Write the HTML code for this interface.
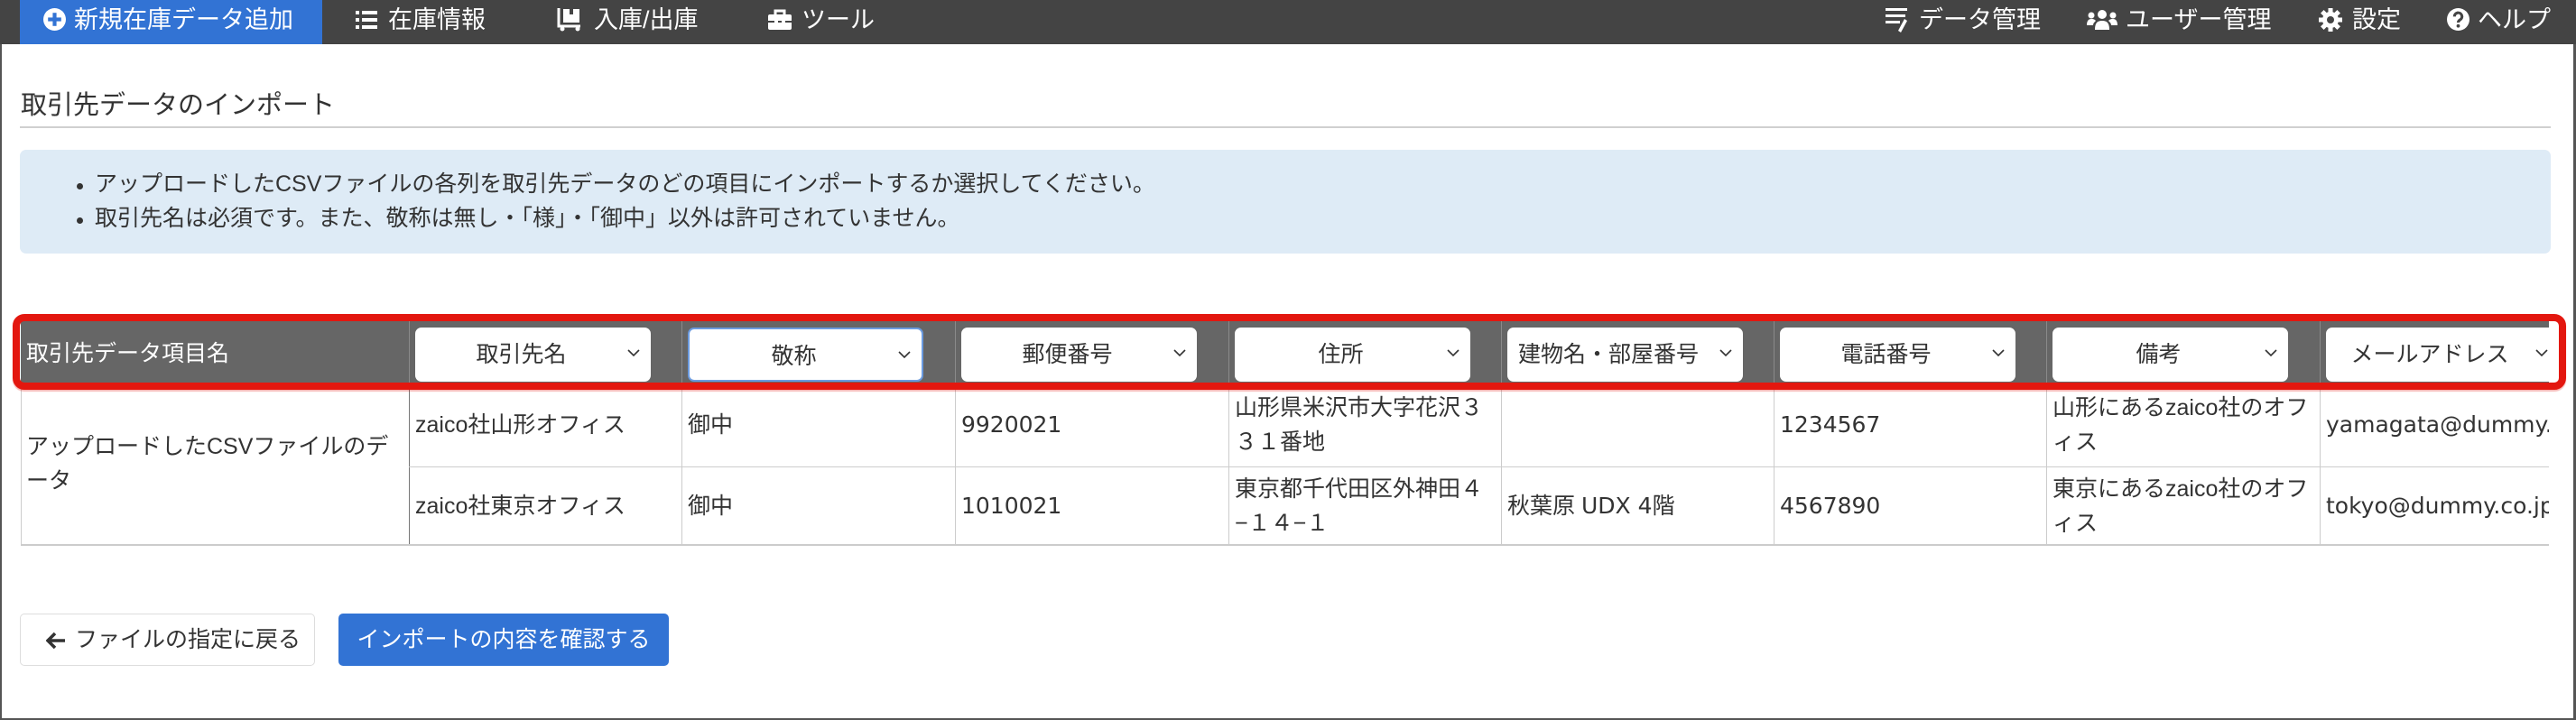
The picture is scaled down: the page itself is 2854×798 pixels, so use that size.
<!DOCTYPE html>
<html><head><meta charset="utf-8"><style>
*{margin:0;padding:0;box-sizing:border-box}
body{width:2854px;height:798px;position:relative;overflow:hidden;background:#fff;font-family:"Liberation Sans","Noto Sans CJK JP",sans-serif;color:#333}
.abs{position:absolute}
.nav{left:0;top:0;width:2854px;height:49px;background:#444}
.ni{position:absolute;top:0;height:49px;line-height:44px;font-size:27px;color:#fff;white-space:nowrap}
.ni svg{position:absolute}
.frame{left:0;top:49px;width:2854px;height:749px;border-left:2px solid #555;border-right:3px solid #555;border-bottom:2px solid #555}
.title{left:23px;top:97px;font-size:29px;line-height:40px;color:#333}
.hr{left:22px;top:140px;width:2804px;height:2px;background:#d0d0d0}
.info{left:22px;top:166px;width:2804px;height:115px;background:#deebf6;border-radius:7px}
.li{position:absolute;left:105px;font-size:25px;line-height:36px;white-space:nowrap;color:#333}
.dot{position:absolute;left:85px;width:7px;height:7px;border-radius:50%;background:#333}
.hdr{left:23px;top:356px;width:2801px;height:68px;background:#666}
.hcell{position:absolute;top:0;height:68px}
.sel{position:absolute;top:7px;left:6px;width:261px;height:60px;background:#fff;border-radius:7px;font-size:25px;line-height:60px;text-align:center;padding-right:26px;color:#333;white-space:nowrap;overflow:hidden}
.sel svg{position:absolute;right:12px;top:24px}
.vl{position:absolute;width:1px}
.cell{position:absolute;font-size:25px;line-height:38px;color:#333;display:flex;align-items:center;padding-left:6px}
.lat{font-family:"DejaVu Sans","Noto Sans CJK JP",sans-serif}
.red{left:14px;top:348px;width:2829px;height:84px;border:8px solid #e3170f;border-radius:13px;box-shadow:0 2px 1px rgba(227,23,15,.3)}
.btn{position:absolute;top:680px;height:58px;border-radius:5px;font-size:25px;line-height:56px;white-space:nowrap}
</style></head><body>
<div class="abs nav">
 <div class="ni" style="left:22px;width:335px;background:#3273d4"></div>
 <div class="ni" style="left:48px"><svg style="left:0;top:9px" width="25" height="25" viewBox="0 0 24 24"><circle cx="12" cy="12" r="12" fill="#fff"/><rect x="10" y="5" width="4" height="14" fill="#3273d4"/><rect x="5" y="10" width="14" height="4" fill="#3273d4"/></svg><span style="margin-left:34px">新規在庫データ追加</span></div>
 <div class="ni" style="left:394px"><svg style="left:0;top:11px" width="24" height="22" viewBox="0 0 24 22"><rect x="0" y="1" width="4" height="4" fill="#fff"/><rect x="0" y="9" width="4" height="4" fill="#fff"/><rect x="0" y="17" width="4" height="4" fill="#fff"/><rect x="7" y="1" width="17" height="4" fill="#fff"/><rect x="7" y="9" width="17" height="4" fill="#fff"/><rect x="7" y="17" width="17" height="4" fill="#fff"/></svg><span style="margin-left:36px">在庫情報</span></div>
 <div class="ni" style="left:617px"><svg style="left:0;top:7px" width="28" height="28" viewBox="0 0 28 28"><path d="M2 2v20h24" stroke="#fff" stroke-width="3" fill="none"/><rect x="7" y="3" width="18" height="15" fill="#fff"/><rect x="14" y="3" width="4" height="6" fill="#444"/><circle cx="6" cy="25" r="2.5" fill="#fff"/><circle cx="23" cy="25" r="2.5" fill="#fff"/></svg><span style="margin-left:41px">入庫/出庫</span></div>
 <div class="ni" style="left:851px"><svg style="left:0;top:10px" width="26" height="24" viewBox="0 0 26 24"><path d="M8 6V2h10v4" stroke="#fff" stroke-width="3" fill="none"/><rect x="0" y="6" width="26" height="17" rx="2" fill="#fff"/><rect x="0" y="13" width="26" height="2" fill="#444"/><rect x="7" y="11" width="4" height="6" fill="#fff"/><rect x="15" y="11" width="4" height="6" fill="#fff"/></svg><span style="margin-left:37px">ツール</span></div>
 <div class="ni" style="left:2089px"><svg style="left:0;top:9px" width="26" height="28" viewBox="0 0 26 28"><rect x="0" y="0" width="24" height="3" fill="#fff"/><rect x="0" y="7" width="22" height="3" fill="#fff"/><rect x="0" y="14" width="16" height="3" fill="#fff"/><path d="M21 12l3 2-7 13-3-2z" fill="#fff"/></svg><span style="margin-left:37px">データ管理</span></div>
 <div class="ni" style="left:2312px"><svg style="left:0;top:11px" width="34" height="24" viewBox="0 0 34 24"><circle cx="5" cy="6" r="3.5" fill="#fff"/><circle cx="29" cy="6" r="3.5" fill="#fff"/><circle cx="17" cy="5" r="5" fill="#fff"/><path d="M9 22c0-8 3-10 8-10s8 2 8 10z" fill="#fff"/><path d="M0 17c0-5 2-7 5-7s4 1 5 2c-2 2-3 3-3 5z M34 17c0-5-2-7-5-7s-4 1-5 2c2 2 3 3 3 5z" fill="#fff"/></svg><span style="margin-left:43px">ユーザー管理</span></div>
 <div class="ni" style="left:2569px"><svg style="left:0;top:9px" width="26" height="26" viewBox="0 0 26 26"><g fill="#fff"><circle cx="13" cy="13" r="9"/><rect x="10.5" y="0" width="5" height="26"/><rect x="0" y="10.5" width="26" height="5"/><rect x="10.5" y="0" width="5" height="26" transform="rotate(45 13 13)"/><rect x="10.5" y="0" width="5" height="26" transform="rotate(-45 13 13)"/></g><circle cx="13" cy="13" r="4" fill="#444"/></svg><span style="margin-left:37px">設定</span></div>
 <div class="ni" style="left:2711px"><svg style="left:0;top:9px" width="25" height="25" viewBox="0 0 24 24"><circle cx="12" cy="12" r="12" fill="#fff"/><path d="M8 9a4 4 0 1 1 6 3.4c-1.4.8-2 1.4-2 3" stroke="#444" stroke-width="3" fill="none"/><circle cx="12" cy="19" r="1.8" fill="#444"/></svg><span style="margin-left:34px">ヘルプ</span></div>
</div>
<div class="abs frame"></div>
<div class="abs title">取引先データのインポート</div>
<div class="abs hr"></div>
<div class="abs info">
 <div class="dot" style="top:37px;left:63px"></div><div class="li" style="top:20px;left:83px">アップロードしたCSVファイルの各列を取引先データのどの項目にインポートするか選択してください。</div>
 <div class="dot" style="top:75px;left:63px"></div><div class="li" style="top:58px;left:83px">取引先名は必須です。また、敬称は無し・「様」・「御中」以外は許可されていません。</div>
</div>

<div class="abs hdr">
 <div class="hcell" style="left:6px;font-size:25px;line-height:72px;color:#fff">取引先データ項目名</div>
 <div class="vl" style="left:430px;top:0;height:68px;background:#8a8a8a"></div>
 <div class="hcell" style="left:431px"><div class="sel">取引先名<svg width="14" height="9" viewBox="0 0 14 9"><path d="M1 1l6 6 6-6" stroke="#333" stroke-width="1.6" fill="none"/></svg></div></div>
 <div class="vl" style="left:732px;top:0;height:68px;background:#8a8a8a"></div>
 <div class="hcell" style="left:733px"><div class="sel" style="border:2px solid #6b9be0">敬称<svg width="14" height="9" viewBox="0 0 14 9"><path d="M1 1l6 6 6-6" stroke="#333" stroke-width="1.6" fill="none"/></svg></div></div>
 <div class="vl" style="left:1035px;top:0;height:68px;background:#8a8a8a"></div>
 <div class="hcell" style="left:1036px"><div class="sel">郵便番号<svg width="14" height="9" viewBox="0 0 14 9"><path d="M1 1l6 6 6-6" stroke="#333" stroke-width="1.6" fill="none"/></svg></div></div>
 <div class="vl" style="left:1338px;top:0;height:68px;background:#8a8a8a"></div>
 <div class="hcell" style="left:1339px"><div class="sel">住所<svg width="14" height="9" viewBox="0 0 14 9"><path d="M1 1l6 6 6-6" stroke="#333" stroke-width="1.6" fill="none"/></svg></div></div>
 <div class="vl" style="left:1640px;top:0;height:68px;background:#8a8a8a"></div>
 <div class="hcell" style="left:1641px"><div class="sel" style="text-align:left;padding-left:12px">建物名・部屋番号<svg width="14" height="9" viewBox="0 0 14 9"><path d="M1 1l6 6 6-6" stroke="#333" stroke-width="1.6" fill="none"/></svg></div></div>
 <div class="vl" style="left:1942px;top:0;height:68px;background:#8a8a8a"></div>
 <div class="hcell" style="left:1943px"><div class="sel">電話番号<svg width="14" height="9" viewBox="0 0 14 9"><path d="M1 1l6 6 6-6" stroke="#333" stroke-width="1.6" fill="none"/></svg></div></div>
 <div class="vl" style="left:2244px;top:0;height:68px;background:#8a8a8a"></div>
 <div class="hcell" style="left:2245px"><div class="sel">備考<svg width="14" height="9" viewBox="0 0 14 9"><path d="M1 1l6 6 6-6" stroke="#333" stroke-width="1.6" fill="none"/></svg></div></div>
 <div class="vl" style="left:2547px;top:0;height:68px;background:#8a8a8a"></div>
 <div class="hcell" style="left:2548px;width:253px;overflow:hidden"><div class="sel" style="width:270px;border-radius:7px 0 0 7px;padding-right:40px">メールアドレス<svg style="right:24px" width="14" height="9" viewBox="0 0 14 9"><path d="M1 1l6 6 6-6" stroke="#333" stroke-width="1.6" fill="none"/></svg></div></div>
</div>

<div class="abs" style="left:23px;top:424px;width:2801px;height:181px;overflow:hidden">
 <div class="vl" style="left:0;top:0;height:181px;background:#ccc"></div>
 <div class="vl" style="left:430px;top:0;height:181px;background:#777"></div>
 <div class="vl" style="left:732px;top:0;height:181px;background:#ccc"></div>
 <div class="vl" style="left:1035px;top:0;height:181px;background:#ccc"></div>
 <div class="vl" style="left:1338px;top:0;height:181px;background:#ccc"></div>
 <div class="vl" style="left:1640px;top:0;height:181px;background:#ccc"></div>
 <div class="vl" style="left:1942px;top:0;height:181px;background:#ccc"></div>
 <div class="vl" style="left:2244px;top:0;height:181px;background:#ccc"></div>
 <div class="vl" style="left:2547px;top:0;height:181px;background:#ccc"></div>
 <div class="abs" style="left:430px;top:93px;width:2400px;height:1px;background:#ccc"></div>
 <div class="abs" style="left:0;top:179px;width:2830px;height:2px;background:#ccc"></div>
 <div class="cell" style="left:0;top:0;width:430px;height:180px">アップロードしたCSVファイルのデータ</div>
 <div class="cell" style="left:431px;top:0;width:301px;height:93px">zaico社山形オフィス</div>
 <div class="cell" style="left:733px;top:0;width:301px;height:93px">御中</div>
 <div class="cell lat" style="left:1036px;top:0;width:301px;height:93px">9920021</div>
 <div class="cell" style="left:1339px;top:0;width:301px;height:93px">山形県米沢市大字花沢３３１番地</div>
 <div class="cell lat" style="left:1943px;top:0;width:301px;height:93px">1234567</div>
 <div class="cell" style="left:2245px;top:0;width:301px;height:93px">山形にあるzaico社のオフィス</div>
 <div class="cell lat" style="left:2548px;top:0;width:400px;height:93px;white-space:nowrap">yamagata@dummy.co.jp</div>
 <div class="cell" style="left:431px;top:94px;width:301px;height:85px">zaico社東京オフィス</div>
 <div class="cell" style="left:733px;top:94px;width:301px;height:85px">御中</div>
 <div class="cell lat" style="left:1036px;top:94px;width:301px;height:85px">1010021</div>
 <div class="cell" style="left:1339px;top:94px;width:301px;height:85px">東京都千代田区外神田４−１４−１</div>
 <div class="cell" style="left:1641px;top:94px;width:301px;height:85px;white-space:pre">秋葉原 <span class="lat">UDX 4</span>階</div>
 <div class="cell lat" style="left:1943px;top:94px;width:301px;height:85px">4567890</div>
 <div class="cell" style="left:2245px;top:94px;width:301px;height:85px">東京にあるzaico社のオフィス</div>
 <div class="cell lat" style="left:2548px;top:94px;width:400px;height:85px;white-space:nowrap">tokyo@dummy.co.jp</div>
</div>
<div class="abs red"></div>

<div class="btn" style="left:22px;width:327px;border:1px solid #ddd;background:#fff;color:#333"><svg style="position:absolute;left:28px;top:19px" width="22" height="20" viewBox="0 0 22 20"><path d="M10 2L2 10l8 8M2 10h19" stroke="#333" stroke-width="3.5" fill="none"/></svg><span style="position:absolute;left:60px">ファイルの指定に戻る</span></div>
<div class="btn" style="left:375px;width:366px;background:#3273d4;color:#fff;text-align:center;line-height:58px">インポートの内容を確認する</div>
</body></html>
